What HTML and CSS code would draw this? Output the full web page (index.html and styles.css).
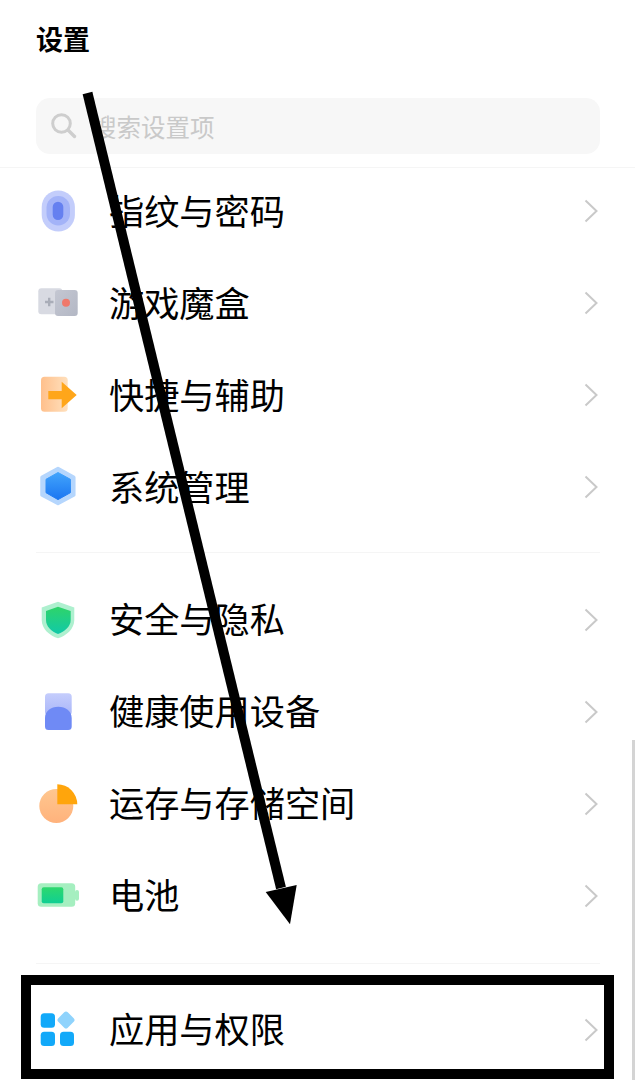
FILE: index.html
```html
<!DOCTYPE html>
<html lang="zh-CN">
<head>
<meta charset="UTF-8">
<title>设置</title>
<link rel="stylesheet" href="styles.css">
</head>
<body>
<div class="page">
  <header class="top">
    <h1>设置</h1>
    <div class="search">
      <svg class="search-icon" width="30" height="30" viewBox="0 0 30 30"><circle cx="12.5" cy="12.5" r="8.8" fill="none" stroke="#cecece" stroke-width="3"/><path d="M19 19l6.5 6.5" stroke="#cecece" stroke-width="3.4" stroke-linecap="round"/></svg>
      <span>搜索设置项</span>
    </div>
  </header>

  <section class="group first">
    <div class="row">
      <svg class="icon" viewBox="0 0 48 48"><rect x="7.7" y="2.5" width="33.2" height="41" rx="16.6" fill="#c3cdfb"/><rect x="12.5" y="8" width="23.5" height="29.5" rx="11.7" fill="#a3b3f8"/><rect x="18.7" y="13.7" width="10.6" height="18.3" rx="5.3" fill="#6580f0"/></svg>
      <span class="label">指纹与密码</span>
      <svg class="chev" viewBox="0 0 14 24"><path d="M1.5 1.5L12.5 12 1.5 22.5"/></svg>
    </div>
    <div class="row">
      <svg class="icon" viewBox="0 0 48 48"><defs><linearGradient id="gameCard" x1="0" y1="0" x2="1" y2="1"><stop offset="0" stop-color="#c4c7d2"/><stop offset="1" stop-color="#b3b7c4"/></linearGradient></defs><rect x="4.3" y="8.3" width="24" height="26" rx="3" fill="#d8dae2"/><rect x="21" y="10" width="22.7" height="26" rx="3" fill="url(#gameCard)"/><path d="M11 22h8.5M15.2 17.8v8.4" stroke="#a9adb8" stroke-width="2.4"/><circle cx="32" cy="22.7" r="4" fill="#f0786a"/></svg>
      <span class="label">游戏魔盒</span>
      <svg class="chev" viewBox="0 0 14 24"><path d="M1.5 1.5L12.5 12 1.5 22.5"/></svg>
    </div>
    <div class="row">
      <svg class="icon" viewBox="0 0 48 48"><defs><linearGradient id="shortcutCard" x1="0" y1="0" x2="1" y2="0"><stop offset="0" stop-color="#ffc08c"/><stop offset="1" stop-color="#ffe0bd"/></linearGradient></defs><rect x="7" y="4.7" width="26.7" height="35" rx="3.5" fill="url(#shortcutCard)"/><path d="M14.3 19h13.4V9.7L42.7 23 27.7 36.3V27.3H14.3z" fill="#ffa61a"/></svg>
      <span class="label">快捷与辅助</span>
      <svg class="chev" viewBox="0 0 14 24"><path d="M1.5 1.5L12.5 12 1.5 22.5"/></svg>
    </div>
    <div class="row">
      <svg class="icon" viewBox="0 0 48 48"><defs><linearGradient id="hexFill" x1="0" y1="0" x2="0" y2="1"><stop offset="0" stop-color="#42a4fc"/><stop offset="1" stop-color="#1b76f1"/></linearGradient></defs><path d="M24 4.5L39.8 13.2V31L24 39.5 8 31V13.2z" fill="#b5d6fd" stroke="#b5d6fd" stroke-width="3.5" stroke-linejoin="round"/><path d="M24 8.5L36.4 15.3V28.7L24 35.6 12 28.7V15.3z" fill="url(#hexFill)" stroke="url(#hexFill)" stroke-width="1" stroke-linejoin="round"/></svg>
      <span class="label">系统管理</span>
      <svg class="chev" viewBox="0 0 14 24"><path d="M1.5 1.5L12.5 12 1.5 22.5"/></svg>
    </div>
  </section>

  <hr class="divider">

  <section class="group">
    <div class="row">
      <svg class="icon" viewBox="0 0 48 48"><defs><linearGradient id="shieldFill" x1="0" y1="0" x2="0" y2="1"><stop offset="0" stop-color="#2fd469"/><stop offset="1" stop-color="#10c9a8"/></linearGradient></defs><path d="M24 5.7L40.3 11.5V24C40.3 33 32 40 24 42.3 16 40 7.7 33 7.7 24V11.5z" fill="#aef0cf"/><path d="M24 10.7L36.7 15V24C36.7 30.5 30.5 35.8 24 38 17.5 35.8 12 30.5 12 24V15z" fill="url(#shieldFill)"/></svg>
      <span class="label">安全与隐私</span>
      <svg class="chev" viewBox="0 0 14 24"><path d="M1.5 1.5L12.5 12 1.5 22.5"/></svg>
    </div>
    <div class="row">
      <svg class="icon" viewBox="0 0 48 48"><defs><linearGradient id="healthTop" x1="0" y1="0" x2="0" y2="1"><stop offset="0" stop-color="#c5cdfc"/><stop offset="1" stop-color="#a9b6f9"/></linearGradient></defs><rect x="11" y="5.3" width="26.7" height="22" rx="3.5" fill="url(#healthTop)"/><path d="M11 30C11 23 17 18.7 24.3 18.7S37.7 23 37.7 30V38.5A3.5 3.5 0 0 1 34.2 42H14.5A3.5 3.5 0 0 1 11 38.5z" fill="#6f8af5"/></svg>
      <span class="label">健康使用设备</span>
      <svg class="chev" viewBox="0 0 14 24"><path d="M1.5 1.5L12.5 12 1.5 22.5"/></svg>
    </div>
    <div class="row">
      <svg class="icon" viewBox="0 0 48 48"><defs><linearGradient id="pieFill" x1="0" y1="0" x2="0" y2="1"><stop offset="0" stop-color="#ffc78f"/><stop offset="1" stop-color="#ffb27c"/></linearGradient></defs><circle cx="22.3" cy="26" r="17" fill="url(#pieFill)"/><path d="M23.3 24.3V4.3A20 20 0 0 1 43.3 24.3z" fill="#ffa50c"/></svg>
      <span class="label">运存与存储空间</span>
      <svg class="chev" viewBox="0 0 14 24"><path d="M1.5 1.5L12.5 12 1.5 22.5"/></svg>
    </div>
    <div class="row">
      <svg class="icon" viewBox="0 0 48 48"><defs><linearGradient id="batFill" x1="0" y1="0" x2="0" y2="1"><stop offset="0" stop-color="#2dd86d"/><stop offset="1" stop-color="#10cf93"/></linearGradient></defs><rect x="3.7" y="11.3" width="37.5" height="23.4" rx="3.5" fill="#a5efc0"/><rect x="41" y="18" width="4" height="10.7" rx="2" fill="#a5efc0"/><rect x="7.7" y="15.3" width="21.6" height="16" rx="2" fill="url(#batFill)"/></svg>
      <span class="label">电池</span>
      <svg class="chev" viewBox="0 0 14 24"><path d="M1.5 1.5L12.5 12 1.5 22.5"/></svg>
    </div>
  </section>

  <hr class="divider lower">

  <section class="group">
    <div class="row">
      <svg class="icon" viewBox="0 0 48 48"><rect x="6.7" y="7.3" width="14.3" height="14.4" rx="3.5" fill="#12a9f9"/><rect x="6.7" y="25.7" width="14.3" height="14.3" rx="3.5" fill="#12a9f9"/><rect x="26" y="25.7" width="14" height="14.3" rx="3.5" fill="#12a9f9"/><rect x="25.3" y="7.3" width="13.4" height="13.4" rx="2.5" transform="rotate(45 32 14)" fill="#8fd3fc"/></svg>
      <span class="label">应用与权限</span>
      <svg class="chev" viewBox="0 0 14 24"><path d="M1.5 1.5L12.5 12 1.5 22.5"/></svg>
    </div>
  </section>

  <!-- 标注层：箭头和方框盖在页面上 -->
  <svg class="arrow" width="635" height="1080" viewBox="0 0 635 1080"><path d="M87.5 93L281 888" stroke="#000" stroke-width="10"/><path d="M265.7 892L296.7 885 290 924.3z" fill="#000"/></svg>
  <div class="mark"></div>
  <div class="scrollbar"></div>
</div>
</body>
</html>
```

FILE: styles.css
```css
*{box-sizing:border-box;margin:0;padding:0;}
body{background:#fff;color:#000;font-family:"Noto Sans CJK SC","Noto Sans",sans-serif;}
.page{position:relative;width:635px;height:1080px;overflow:hidden;}

.top{height:168px;padding:20px 35px 0 36px;border-bottom:1px solid #f5f5f5;}
h1{font-size:27px;line-height:38px;font-weight:700;margin-bottom:40px;}
.search{display:flex;align-items:center;height:56px;padding-left:13px;background:#f7f7f7;border-radius:14px;}
.search-icon{flex:none;margin-right:13px;}
.search span{font-size:24.5px;color:#c9c9c9;}

.divider{border:none;height:1px;background:#f5f5f5;margin:16px 35px 23px 36px;}
.divider.lower{margin-top:19px;margin-bottom:22px;}

.row{display:flex;align-items:center;height:92px;padding:0 37px 4px 34px;}
.icon{flex:none;width:48px;height:48px;}
.label{margin:0 0 4px 27px;font-size:35.2px;line-height:48px;}
.chev{flex:none;width:14px;height:24px;margin-left:auto;}
.first .chev{margin-bottom:2px;}
.chev path{fill:none;stroke:#c9c9c9;stroke-width:2;}

.arrow{position:absolute;left:0;top:0;}
.mark{position:absolute;left:21px;top:975px;width:593px;height:104px;border:10px solid #000;}
.scrollbar{position:absolute;right:0;top:740px;width:3px;height:340px;background:#d4d4d4;}
```
